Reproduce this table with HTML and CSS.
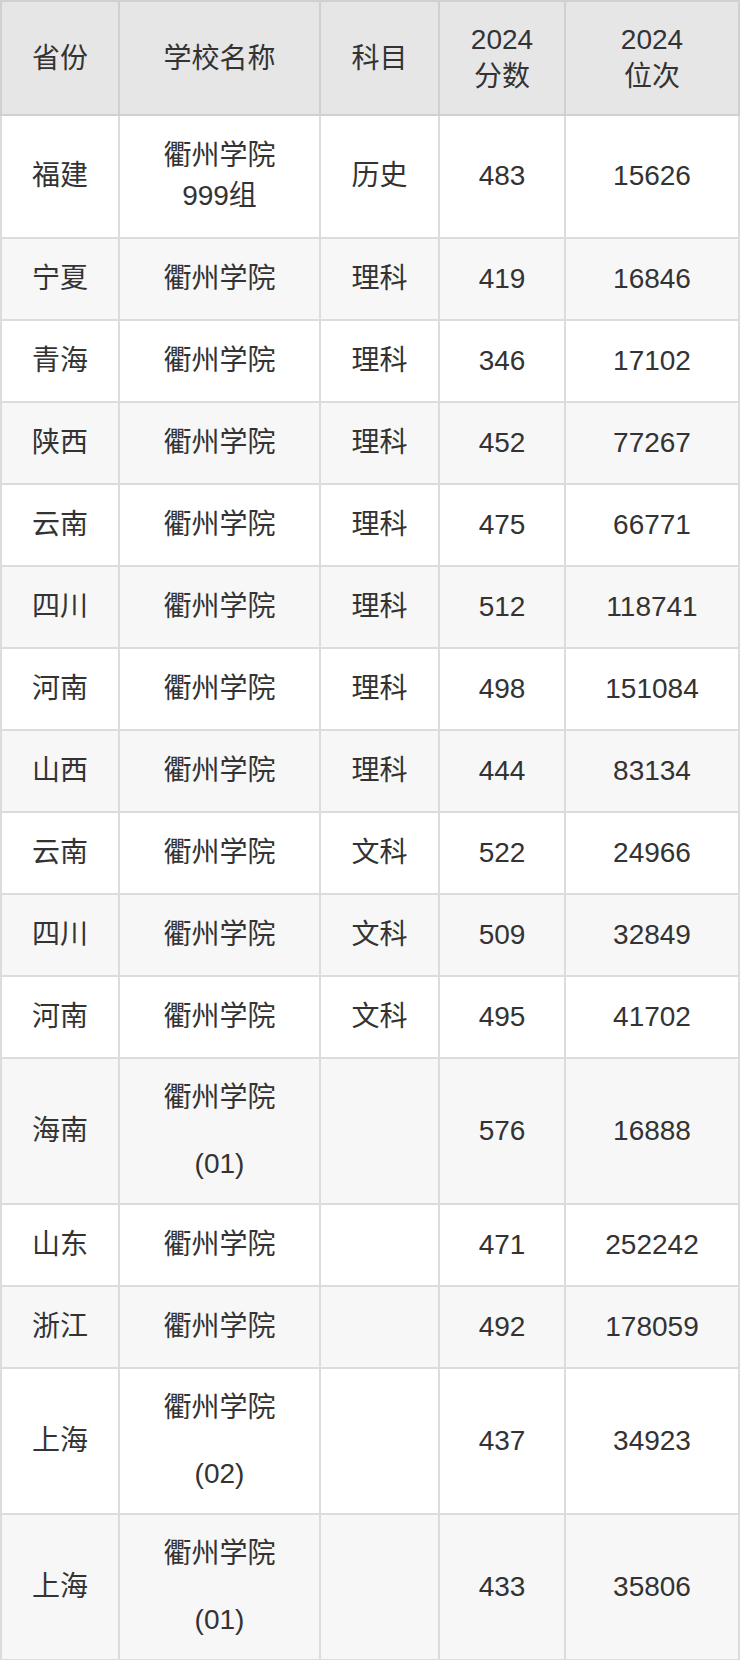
FILE: index.html
```html
<!DOCTYPE html>
<html lang="zh-CN">
<head>
<meta charset="utf-8">
<title>衢州学院 2024 分数</title>
<link rel="stylesheet" href="styles.css">
</head>
<body>
<table class="score-table">
  <colgroup>
    <col class="c1"><col class="c2"><col class="c3"><col class="c4"><col class="c5">
  </colgroup>
  <thead>
    <tr><th>省份</th><th>学校名称</th><th>科目</th><th>2024<br>分数</th><th>2024<br>位次</th></tr>
  </thead>
  <tbody>
    <tr class="first"><td>福建</td><td>衢州学院<br>999组</td><td>历史</td><td>483</td><td>15626</td></tr>
    <tr><td>宁夏</td><td>衢州学院</td><td>理科</td><td>419</td><td>16846</td></tr>
    <tr><td>青海</td><td>衢州学院</td><td>理科</td><td>346</td><td>17102</td></tr>
    <tr><td>陕西</td><td>衢州学院</td><td>理科</td><td>452</td><td>77267</td></tr>
    <tr><td>云南</td><td>衢州学院</td><td>理科</td><td>475</td><td>66771</td></tr>
    <tr><td>四川</td><td>衢州学院</td><td>理科</td><td>512</td><td>118741</td></tr>
    <tr><td>河南</td><td>衢州学院</td><td>理科</td><td>498</td><td>151084</td></tr>
    <tr><td>山西</td><td>衢州学院</td><td>理科</td><td>444</td><td>83134</td></tr>
    <tr><td>云南</td><td>衢州学院</td><td>文科</td><td>522</td><td>24966</td></tr>
    <tr><td>四川</td><td>衢州学院</td><td>文科</td><td>509</td><td>32849</td></tr>
    <tr><td>河南</td><td>衢州学院</td><td>文科</td><td>495</td><td>41702</td></tr>
    <tr><td>海南</td><td class="tall"><span class="l1">衢州学院</span><span class="l2">(01)</span></td><td></td><td>576</td><td>16888</td></tr>
    <tr><td>山东</td><td>衢州学院</td><td></td><td>471</td><td>252242</td></tr>
    <tr><td>浙江</td><td>衢州学院</td><td></td><td>492</td><td>178059</td></tr>
    <tr><td>上海</td><td class="tall"><span class="l1">衢州学院</span><span class="l2">(02)</span></td><td></td><td>437</td><td>34923</td></tr>
    <tr><td>上海</td><td class="tall"><span class="l1">衢州学院</span><span class="l2">(01)</span></td><td></td><td>433</td><td>35806</td></tr>
  </tbody>
</table>
</body>
</html>
```

FILE: styles.css
```css
html, body {
  margin: 0;
  padding: 0;
  background: #ffffff;
}
body {
  font-family: "Liberation Sans", Arial, "Noto Sans CJK SC", sans-serif;
  color: #333333;
  font-size: 28px;
}
.score-table {
  width: 740px;
  border-collapse: collapse;
  table-layout: fixed;
  border: 2px solid #d4d4d4;
}
.c1 { width: 118px; }
.c2 { width: 201px; }
.c3 { width: 119px; }
.c4 { width: 126px; }
.c5 { width: 174px; }
.score-table th,
.score-table td {
  border: 2px solid #dcdcdc;
  text-align: center;
  vertical-align: middle;
  padding: 20px 4px;
  line-height: 40px;
  font-weight: normal;
}
.score-table th {
  background: #e6e6e6;
  border-color: #d0d0d0;
  padding: 19px 4px;
  line-height: 37px;
  color: #333333;
}
.score-table tbody tr.first td { padding: 20px 4px 21px; }
.score-table tbody tr:nth-child(odd) td { background: #ffffff; }
.score-table tbody tr:nth-child(even) td { background: #f7f7f7; }
.score-table td.tall { padding: 19px 4px; }
.tall .l1, .tall .l2 {
  display: block;
  line-height: 40px;
}
.tall .l2 { margin-top: 26px; }
```
